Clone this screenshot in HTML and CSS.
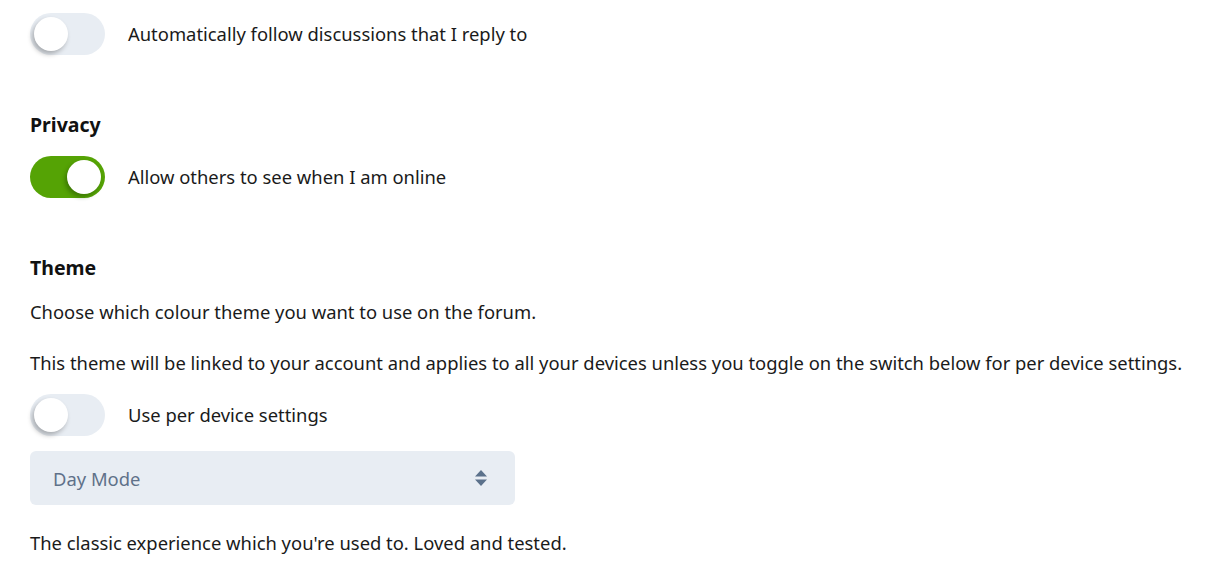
FILE: index.html
```html
<!DOCTYPE html>
<html>
<head>
<meta charset="utf-8">
<link rel="stylesheet" href="styles.css">
</head>
<body>
<div class="page">
  <div class="toggle-row first">
    <span class="toggle"><span class="knob"></span></span>
    <span class="label">Automatically follow discussions that I reply to</span>
  </div>

  <h3 class="heading privacy">Privacy</h3>
  <div class="toggle-row">
    <span class="toggle on"><span class="knob"></span></span>
    <span class="label">Allow others to see when I am online</span>
  </div>

  <h3 class="heading theme">Theme</h3>
  <p class="text choose">Choose which colour theme you want to use on the forum.</p>
  <p class="text linked">This theme will be linked to your account and applies to all your devices unless you toggle on the switch below for per device settings.</p>
  <div class="toggle-row device">
    <span class="toggle"><span class="knob"></span></span>
    <span class="label">Use per device settings</span>
  </div>

  <div class="select">
    <span class="select-value">Day Mode</span>
    <svg class="select-arrows" width="12" height="16" viewBox="0 0 12 16"><path d="M6 0 L12 6.5 H0 Z M0 9.5 H12 L6 16 Z" fill="#5b718b"/></svg>
  </div>

  <p class="text classic">The classic experience which you're used to. Loved and tested.</p>
</div>
</body>
</html>
```

FILE: styles.css
```css
html, body {
  margin: 0;
  padding: 0;
  background: #ffffff;
}
body {
  font-family: "Noto Sans", "Open Sans", sans-serif;
  color: #1a1a1a;
  font-size: 18.4px;
}
.page {
  padding: 13px 8px 0 30px;
}
.toggle-row {
  display: flex;
  align-items: center;
  gap: 23px;
  height: 42px;
}
.toggle {
  position: relative;
  width: 75px;
  height: 42px;
  border-radius: 21px;
  background: #e8edf3;
  flex: none;
}
.toggle .knob {
  position: absolute;
  left: 4px;
  top: 4px;
  width: 34px;
  height: 34px;
  border-radius: 50%;
  background: #ffffff;
  box-shadow: -2px 3px 5px rgba(0, 0, 0, 0.28);
}
.toggle.on {
  background: #55a305;
}
.toggle.on .knob {
  left: 37px;
  box-shadow: -2px 3px 4px rgba(30, 70, 0, 0.45);
}
.label {
  line-height: 24px;
  color: #1a1a1a;
}
.heading {
  margin: 0;
  font-size: 19.5px;
  font-weight: 700;
  line-height: 26px;
  color: #111;
}
.privacy {
  margin-top: 57px;
  margin-bottom: 18px;
}
.theme {
  margin-top: 57px;
}
.text {
  margin: 0;
  line-height: 24px;
}
.choose {
  margin-top: 19px;
}
.linked {
  margin-top: 27px;
  white-space: nowrap;
}
.device {
  margin-top: 19px;
}
.select {
  margin-top: 15px;
  width: 485px;
  height: 54px;
  box-sizing: border-box;
  border-radius: 6px;
  background: #e8edf3;
  display: flex;
  align-items: center;
  justify-content: space-between;
  padding: 0 28px 0 23px;
}
.select-value {
  color: #5f7189;
  font-size: 18.4px;
}
.classic {
  margin-top: 26px;
}
```
